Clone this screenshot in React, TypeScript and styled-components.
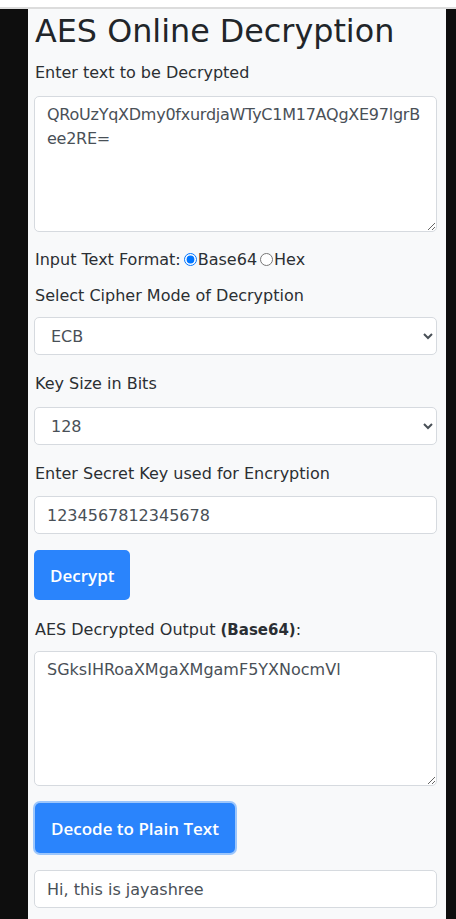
import React from "react";
import styled, { createGlobalStyle } from "styled-components";

const Global = createGlobalStyle`
  html, body { margin: 0; padding: 0; background: #ffffff; }
  body { font-family: "DejaVu Sans", "Liberation Sans", sans-serif; color: #212529; }
  * { box-sizing: border-box; }
`;

const TopStrip = styled.div`
  height: 9px;
  background: #ffffff;
  border-bottom: 2px solid #dcdcdc;
  box-shadow: inset 0 -1px 0 #ffffff;
`;

const Frame = styled.div`
  display: flex;
  min-height: 910px;
  background: #0e0e0e;
`;

const Side = styled.div<{ $w: number }>`
  width: ${(p) => p.$w}px;
  flex: none;
  background: #0e0e0e;
`;

const Content = styled.main`
  flex: 1;
  background: #f8f9fa;
  padding: 0 9px 0 6px;
  display: flex;
  flex-direction: column;
`;

const Title = styled.h1`
  margin: 2px 0 10px 1px;
  font-size: 31.8px;
  line-height: 40px;
  font-weight: 400;
  color: #212529;
`;

const Label = styled.label<{ $mb?: number }>`
  display: block;
  font-size: 16px;
  line-height: 24px;
  color: #2b2f33;
  margin: 0 0 ${(p) => p.$mb ?? 10}px 1px;
  b { font-weight: 700; font-size: 15px; }
`;

const Group = styled.div<{ $mb?: number }>`
  margin-bottom: ${(p) => p.$mb ?? 16}px;
`;

const TextArea = styled.textarea<{ $h?: number; $ls?: number }>`
  display: block;
  width: 100%;
  height: ${(p) => p.$h ?? 136}px;
  padding: 6px 12px;
  font-family: inherit;
  font-size: 16px;
  line-height: 24px;
  letter-spacing: ${(p) => p.$ls ?? 0}px;
  color: #495057;
  background: #ffffff;
  border: 1px solid #d6dadf;
  border-radius: 5px;
  resize: vertical;
  word-break: break-all;
  outline: none;
`;

const TextInput = styled.input`
  display: block;
  width: 100%;
  height: 38px;
  padding: 6px 12px;
  font-family: inherit;
  font-size: 16px;
  line-height: 24px;
  color: #495057;
  background: #ffffff;
  border: 1px solid #d6dadf;
  border-radius: 5px;
  outline: none;
`;

const Select = styled.select`
  display: block;
  width: 100%;
  height: 38px;
  padding: 6px 12px;
  font-family: inherit;
  font-size: 16px;
  line-height: 24px;
  color: #495057;
  background-color: #ffffff;
  border: 1px solid #d6dadf;
  border-radius: 5px;
  outline: none;
`;

const RadioRow = styled.div`
  font-size: 16px;
  line-height: 24px;
  color: #2b2f33;
  margin: 0 0 12px 1px;
  input { margin: 0 1px 0 3px; vertical-align: -1px; }
`;

const Button = styled.button<{ $focus?: boolean }>`
  align-self: flex-start;
  height: 50px;
  padding: 0 16px;
  font-family: "Open Sans", "DejaVu Sans", sans-serif;
  font-size: 17px;
  font-weight: 600;
  color: #ffffff;
  background: #2a84fc;
  border: none;
  border-radius: 5px;
  box-shadow: ${(p) => (p.$focus ? "0 0 0 2px #9cc6fb" : "none")};
  margin-left: ${(p) => (p.$focus ? 1 : 0)}px;
`;

export default function App() {
  return (
    <>
      <Global />
      <TopStrip />
      <Frame>
        <Side $w={28} />
        <Content>
          <Title>AES Online Decryption</Title>
          <Group>
            <Label $mb={11}>Enter text to be Decrypted</Label>
            <TextArea $ls={-0.25} defaultValue="QRoUzYqXDmy0fxurdjaWTyC1M17AQgXE97lgrBee2RE=" />
          </Group>
          <RadioRow>
            Input Text Format:
            <input type="radio" name="fmt" defaultChecked />Base64
            <input type="radio" name="fmt" />Hex
          </RadioRow>
          <Group $mb={17}>
            <Label $mb={9}>Select Cipher Mode of Decryption</Label>
            <Select defaultValue="ECB">
              <option>ECB</option>
              <option>CBC</option>
            </Select>
          </Group>
          <Group $mb={17}>
            <Label $mb={11}>Key Size in Bits</Label>
            <Select defaultValue="128">
              <option>128</option>
              <option>192</option>
              <option>256</option>
            </Select>
          </Group>
          <Group>
            <Label>Enter Secret Key used for Encryption</Label>
            <TextInput defaultValue="1234567812345678" />
          </Group>
          <Group $mb={18}>
            <Button>Decrypt</Button>
          </Group>
          <Group $mb={17}>
            <Label $mb={9}>
              AES Decrypted Output <b>(Base64)</b>:
            </Label>
            <TextArea $h={135} defaultValue="SGksIHRoaXMgaXMgamF5YXNocmVl" />
          </Group>
          <Group $mb={17}>
            <Button $focus>Decode to Plain Text</Button>
          </Group>
          <TextInput defaultValue="Hi, this is jayashree" />
        </Content>
        <Side $w={10} />
      </Frame>
    </>
  );
}
